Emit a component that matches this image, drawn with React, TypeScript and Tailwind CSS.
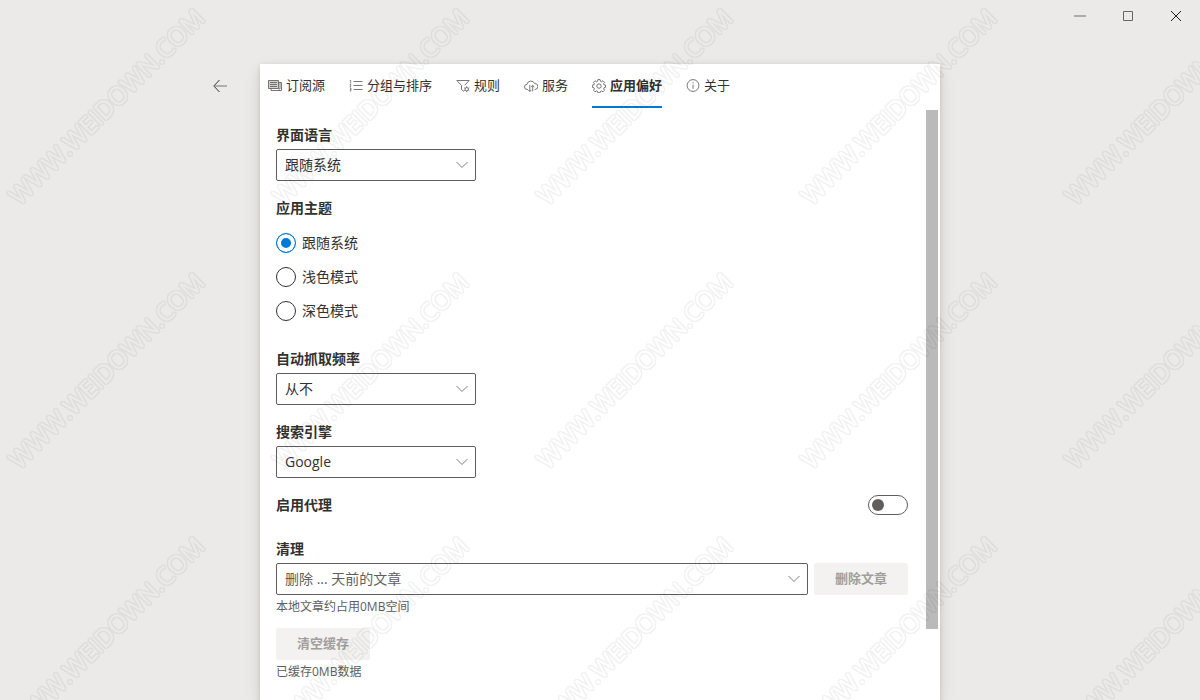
import { useState, type ReactNode } from 'react';

type IconProps = { children: ReactNode; className?: string };

function Icon({ children, className = 'size-3.5' }: IconProps) {
  return (
    <svg
      viewBox="0 0 14 14"
      fill="none"
      stroke="currentColor"
      strokeWidth="0.8"
      aria-hidden="true"
      className={`${className} text-[#555453]`}
    >
      {children}
    </svg>
  );
}

const tabs: { id: string; label: string; icon: ReactNode }[] = [
  {
    id: 'sources',
    label: '订阅源',
    icon: (
      <Icon>
        <path d="M.5 1.500h10v8H.5z" fill="#d6d4d2" />
        <path d="M10.500 3.500h3v8H3v-2M12 3.500v6.500H10.500" />
        <path d="M2 3.500h7M2 5.500h7M2 7.500h7" />
      </Icon>
    ),
  },
  {
    id: 'groups',
    label: '分组与排序',
    icon: (
      <Icon>
        <path d="M4.500 2.500H13.500M4.500 6.500H13.500M4.500 10.500H13.500" />
        <path d="M.8 1.500h.9v3M.8 5.500h1v1.200l-1 .9h1.300M.8 9h1.100v3H.8M1 10.500h.9" strokeWidth="0.7" />
      </Icon>
    ),
  },
  {
    id: 'rules',
    label: '规则',
    icon: (
      <Icon>
        <path d="M8 12.500 5.500 10.500V6.500L.8 1.500h12.400L8.700 6.200" />
        <circle cx="10.700" cy="10.200" r="1.700" />
        <path d="M10.700 7.200v1.300M10.700 11.900v1.300M8.100 8.700l1.100.6M12.200 11.100l1.100.6M8.100 11.700l1.100-.6M12.200 9.300l1.100-.6" strokeWidth="0.7" />
      </Icon>
    ),
  },
  {
    id: 'service',
    label: '服务',
    icon: (
      <Icon>
        <path d="M4 10.500H3.200a2.600 2.600 0 0 1-.2-5.200 4 4 0 0 1 7.600-.8 3 3 0 0 1 .5 6h-.4" />
        <path d="M5.800 6v6.500M4.200 10.900l1.600 1.600 1.500-1.600M8.700 12.500V6.500M7.200 8l1.500-1.500L10.300 8" />
      </Icon>
    ),
  },
  {
    id: 'app',
    label: '应用偏好',
    icon: (
      <Icon>
        <path d="M5.900.6h2.200l.4 1.700 1 .4 1.500-.9 1.500 1.500-.9 1.500.4 1 1.600.4v2.100l-1.600.5-.4 1 .9 1.500-1.500 1.500-1.500-.9-1 .4-.4 1.500H5.900l-.4-1.500-1-.4-1.500.9-1.500-1.500.9-1.500-.4-1-1.600-.5V6.200L2 5.800l.4-1-.9-1.500L3 1.800l1.500.9 1-.4z" />
        <circle cx="7" cy="7.100" r="2.200" />
      </Icon>
    ),
  },
  {
    id: 'about',
    label: '关于',
    icon: (
      <Icon>
        <circle cx="7" cy="6.500" r="5.900" />
        <path d="M7 5.500v4.300M7 3.200v1.100" />
      </Icon>
    ),
  },
];

function Label({ htmlFor, children }: { htmlFor: string; children: ReactNode }) {
  return (
    <label htmlFor={htmlFor} className="block h-7 text-sm leading-7 font-bold">
      {children}
    </label>
  );
}

function Dropdown({
  id,
  options,
  className = '',
}: {
  id: string;
  options: string[];
  className?: string;
}) {
  return (
    <div className={`relative ${className}`}>
      <select
        id={id}
        className="block h-8 w-full appearance-none rounded-xs border border-[#605e5c] bg-white pr-7 pl-2 text-sm"
      >
        {options.map((option) => (
          <option key={option}>{option}</option>
        ))}
      </select>
      <svg
        viewBox="0 0 12 8"
        fill="none"
        stroke="#77807f"
        aria-hidden="true"
        className="pointer-events-none absolute top-3 right-2 h-2 w-3"
      >
        <path d="M.5 1 6 6.500 11.500 1" />
      </svg>
    </div>
  );
}

const themes = ['跟随系统', '浅色模式', '深色模式'];

function Watermark() {
  return (
    <svg aria-hidden="true" className="pointer-events-none fixed inset-0 size-full">
      <defs>
        <filter id="hollow">
          <feMorphology in="SourceAlpha" operator="dilate" radius="1" result="outer" />
          <feComposite in="outer" in2="SourceAlpha" operator="out" />
        </filter>
        <pattern id="mark" width="264" height="264" patternUnits="userSpaceOnUse">
          <g opacity="0.06" filter="url(#hollow)">
            <text
              transform="translate(113 113) rotate(-45)"
              textAnchor="middle"
              stroke="#000"
              strokeWidth="0.5"
              strokeLinejoin="round"
              className="font-['Open_Sans',sans-serif] text-[25px]"
            >
              WWW.WEIDOWN.COM
            </text>
          </g>
        </pattern>
      </defs>
      <rect width="100%" height="100%" fill="url(#mark)" />
    </svg>
  );
}

export default function App() {
  const [tab, setTab] = useState('app');
  const [theme, setTheme] = useState(themes[0]);
  const [proxy, setProxy] = useState(false);

  return (
    <div className="flex h-screen flex-col overflow-hidden bg-[#ebeae8] font-['Open_Sans','Noto_Sans_CJK_SC',sans-serif] text-[#323130]">
      <header className="flex h-8 shrink-0 justify-end text-black">
        <button aria-label="最小化" className="flex w-12 items-center justify-center">
          <svg viewBox="0 0 12 12" className="size-3" aria-hidden="true">
            <path d="M0 6h12" stroke="#aeadab" strokeWidth="2" />
          </svg>
        </button>
        <button aria-label="最大化" className="flex w-12 items-center justify-center">
          <svg viewBox="0 0 12 12" fill="none" className="size-3" aria-hidden="true">
            <path d="M1.500 1.500h9v9h-9z" stroke="#666" />
          </svg>
        </button>
        <button aria-label="关闭" className="flex w-12 items-center justify-center">
          <svg viewBox="0 0 12 12" fill="none" className="size-3" aria-hidden="true">
            <path d="m1 1 10 10M11 1 1 11" stroke="#222" />
          </svg>
        </button>
      </header>

      <main className="grid min-h-0 flex-1 grid-cols-[1fr_minmax(0,680px)_1fr] pt-8">
        <button
          aria-label="返回"
          className="mt-1.5 mr-6 flex size-8 items-center justify-center justify-self-end"
        >
          <svg viewBox="0 0 14 14" fill="none" className="size-3.5" aria-hidden="true">
            <path d="M6.500 1 .8 7l5.700 6" stroke="#333" />
            <path d="M1 7h13" stroke="#777" />
          </svg>
        </button>

        <section className="flex min-h-0 flex-col bg-white shadow-[0_6px_14px_rgba(0,0,0,0.13),0_1px_4px_rgba(0,0,0,0.11)]">
          <nav role="tablist" className="mb-0.5 flex h-11 shrink-0 gap-6 px-2">
            {tabs.map(({ id, label, icon }) => (
              <button
                key={id}
                role="tab"
                aria-selected={tab === id}
                onClick={() => setTab(id)}
                className={`flex items-center gap-1 border-y-2 border-t-transparent text-[13px] whitespace-nowrap ${
                  tab === id ? 'border-b-[#0078d4] font-bold' : 'border-b-transparent'
                }`}
              >
                {icon}
                {label}
              </button>
            ))}
          </nav>

          <div className="flex min-h-0 flex-1 pr-0.5">
            <div className="flex min-w-0 flex-1 flex-col gap-[13px] overflow-hidden pt-[11px] pr-[18px] pl-4">
              <div>
                <Label htmlFor="language">界面语言</Label>
                <Dropdown id="language" options={['跟随系统', '简体中文', 'English']} className="w-50" />
              </div>

              <fieldset>
                <legend className="h-7 text-sm leading-7 font-bold">应用主题</legend>
                <div className="pt-1">
                  {themes.map((name) => (
                    <label key={name} className="flex h-[34px] items-center gap-1.5 text-sm">
                      <input
                        type="radio"
                        name="theme"
                        checked={theme === name}
                        onChange={() => setTheme(name)}
                        className="size-5 appearance-none rounded-full border border-[#323130] bg-white checked:border-[#0078d4] checked:bg-[#0078d4] checked:shadow-[inset_0_0_0_4px_white]"
                      />
                      {name}
                    </label>
                  ))}
                </div>
              </fieldset>

              <div className="mt-1">
                <Label htmlFor="interval">自动抓取频率</Label>
                <Dropdown id="interval" options={['从不', '10分钟', '1小时']} className="w-50" />
              </div>

              <div>
                <Label htmlFor="engine">搜索引擎</Label>
                <Dropdown id="engine" options={['Google', 'Bing']} className="w-50" />
              </div>

              <div className="flex items-center justify-between">
                <Label htmlFor="proxy">启用代理</Label>
                <button
                  id="proxy"
                  role="switch"
                  aria-checked={proxy}
                  onClick={() => setProxy(!proxy)}
                  className={`flex h-5 w-10 items-center rounded-full border border-[#605e5c] px-[3px] ${
                    proxy ? 'justify-end' : 'justify-start'
                  }`}
                >
                  <span className="size-3 rounded-full bg-[#605e5c]" />
                </button>
              </div>

              <div className="mt-[3px]">
                <Label htmlFor="cleanup">清理</Label>
                <div className="flex gap-1.5 text-[#605e5c]">
                  <Dropdown
                    id="cleanup"
                    options={['删除 ... 天前的文章', '7天', '30天']}
                    className="min-w-0 flex-1"
                  />
                  <button
                    disabled
                    className="h-8 w-[94px] rounded-xs bg-[#f3f2f1] text-[13px] font-bold text-[#a19f9d]"
                  >
                    删除文章
                  </button>
                </div>
                <p className="mt-1 text-xs leading-4 text-[#605e5c]">本地文章约占用0MB空间</p>
              </div>

              <div>
                <button
                  disabled
                  className="block h-8 w-[94px] rounded-xs bg-[#f3f2f1] text-[13px] font-bold text-[#a19f9d]"
                >
                  清空缓存
                </button>
                <p className="mt-1 text-xs leading-4 text-[#605e5c]">已缓存0MB数据</p>
              </div>
            </div>
            <div aria-hidden="true" className="h-[88%] w-3 shrink-0 bg-[#bababa]" />
          </div>
        </section>
      </main>

      <Watermark />
    </div>
  );
}
